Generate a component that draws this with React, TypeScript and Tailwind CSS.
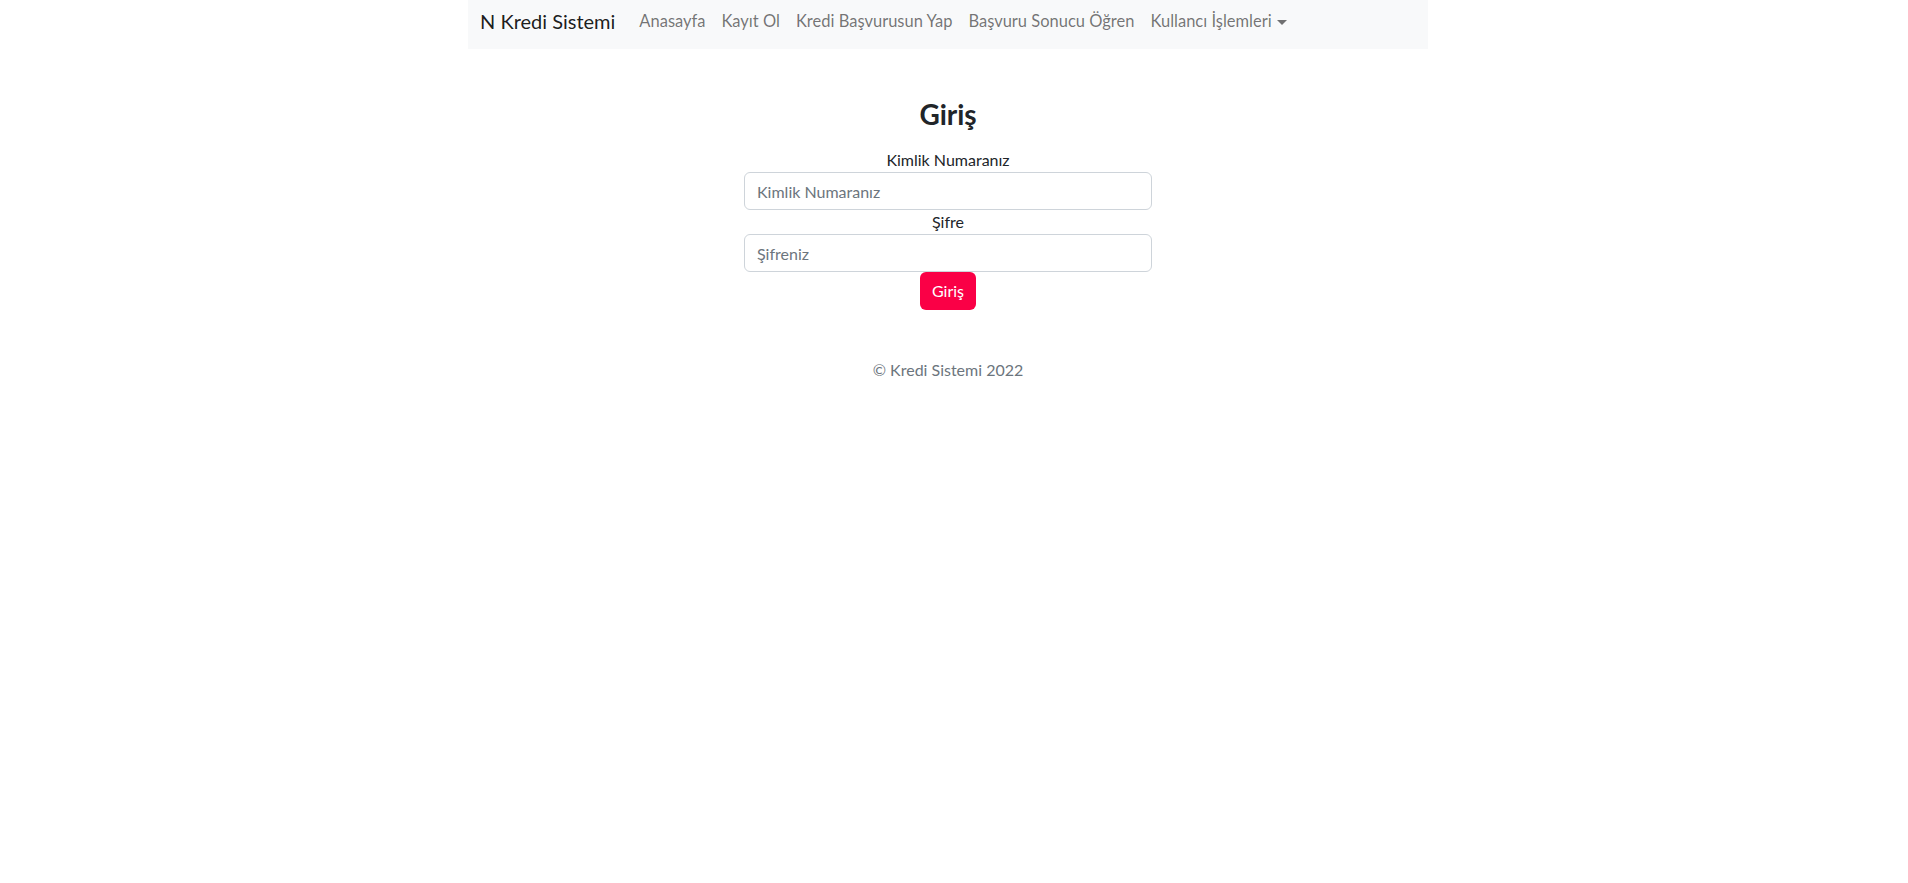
import React from "react";

const links = [
  "Anasayfa",
  "Kayıt Ol",
  "Kredi Başvurusun Yap",
  "Başvuru Sonucu Öğren",
];

const App: React.FC = () => {
  return (
    <div
      className="w-[1896px] min-h-[883px] bg-white text-[#212529]"
      style={{ fontFamily: "Lato, 'Open Sans', sans-serif" }}
    >
      <nav className="mx-auto flex h-[49px] w-[960px] items-center bg-[#f8f9fa] px-3 pb-[7px]">
        <a className="mr-4 text-[20px] text-black/90">N Kredi Sistemi</a>
        <ul className="flex items-center">
          {links.map((l) => (
            <li key={l} className="px-2 text-[16.5px] text-black/55">
              {l}
            </li>
          ))}
          <li className="flex items-center px-2 text-[16.5px] text-black/55">
            Kullancı İşlemleri
            <span className="ml-[5px] mt-[2px] border-x-[5px] border-t-[5px] border-x-transparent border-t-black/55" />
          </li>
        </ul>
      </nav>

      <main className="flex flex-col items-center pt-[48px]">
        <h3 className="mb-[17px] text-[28px] font-bold leading-[34px]">Giriş</h3>
        <form className="flex w-[408px] flex-col items-center">
          <label className="text-[16px] leading-[24px]">Kimlik Numaranız</label>
          <input
            className="h-[38px] w-full rounded-[6px] border border-[#ced4da] px-3 text-[16px] placeholder:text-[#6c757d]"
            placeholder="Kimlik Numaranız"
          />
          <label className="text-[16px] leading-[24px]">Şifre</label>
          <input
            type="password"
            className="h-[38px] w-full rounded-[6px] border border-[#ced4da] px-3 text-[16px] placeholder:text-[#6c757d]"
            placeholder="Şifreniz"
          />
          <button
            type="button"
            className="h-[38px] rounded-[6px] bg-[#fa0046] px-3 text-[16px] text-white"
          >
            Giriş
          </button>
        </form>
        <footer className="mt-[48px] text-[16px] text-[#6c757d]">
          © Kredi Sistemi 2022
        </footer>
      </main>
    </div>
  );
};

export default App;
